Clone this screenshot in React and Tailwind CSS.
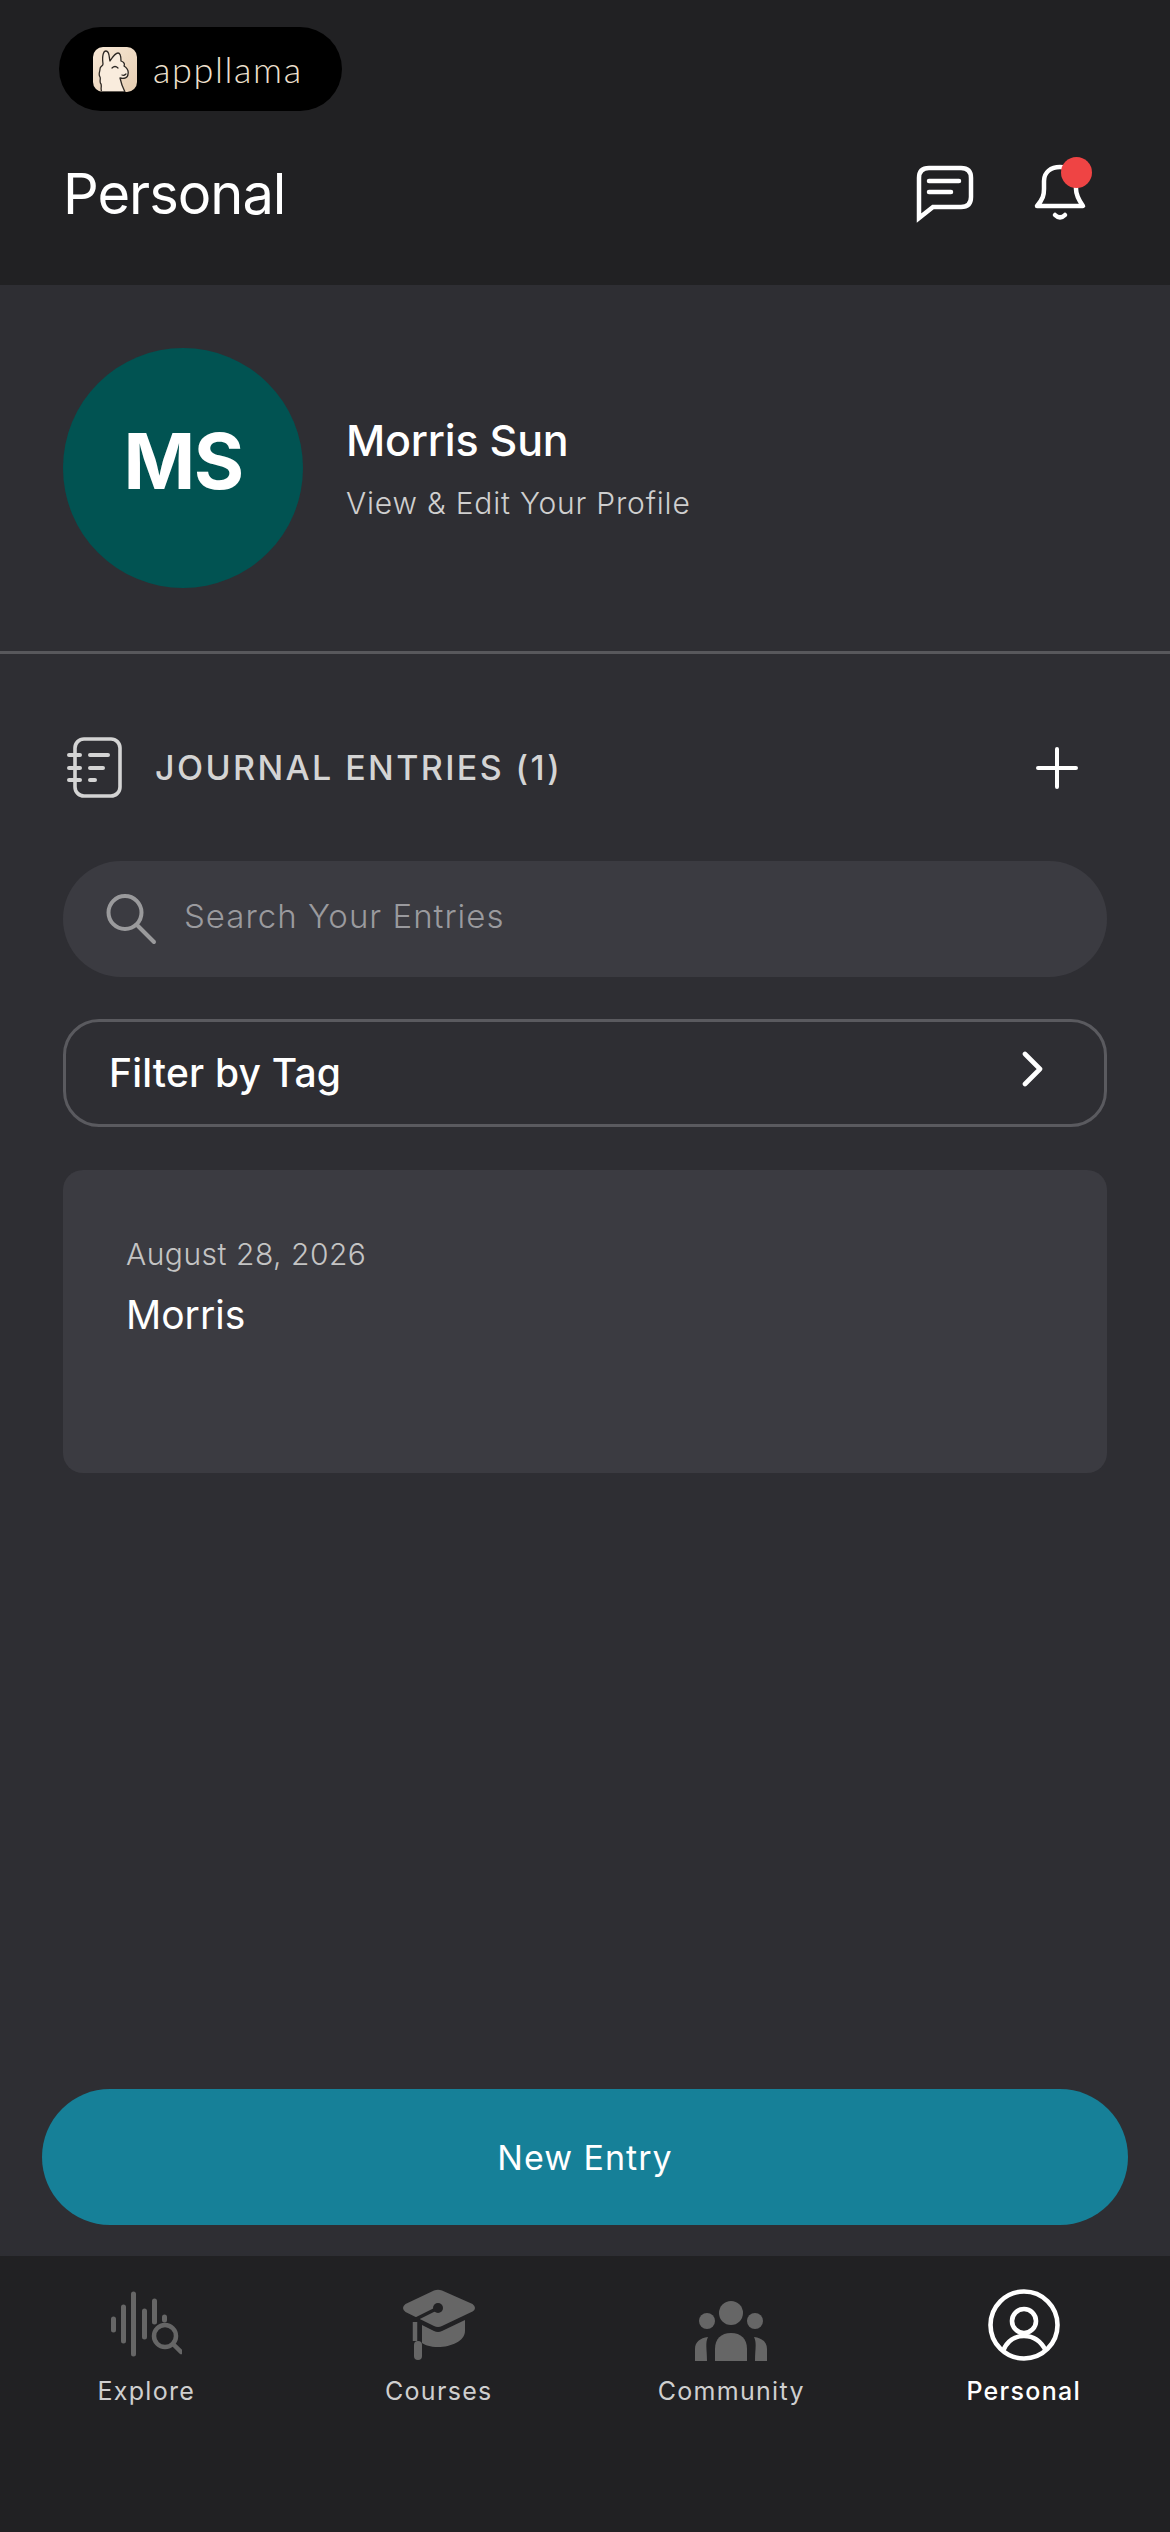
import React from 'react';

function LlamaLogo() {
  return (
    <svg width="44" height="45" viewBox="0 0 44 45" className="rounded-[10px] shrink-0">
      <defs>
        <linearGradient id="tile" x1="0" y1="0" x2="1" y2="1">
          <stop offset="0" stopColor="#f8e8d6" />
          <stop offset="1" stopColor="#e6ceb2" />
        </linearGradient>
      </defs>
      <rect width="44" height="45" fill="url(#tile)" />
      <path
        d="M9 45C7 42 9 40 8 37C6 35 8 32 7 30C5 27 7 25 7 22C7 18 10 20 10 17C9 10 10 4 13 4C17 4 16 12 17 14C19 11 22 6 25 6C27 6 28 10 28 14C31 15 32 17 31 19C34 21 36 23 35 27C35 31 31 32 27 31C28 36 30 41 32 45Z"
        fill="#f9ecdd"
        stroke="#2d2824"
        strokeWidth="1.3"
        strokeLinejoin="round"
      />
      <path d="M19 21Q22 18 25 21M29 28Q31 29 33 27" fill="none" stroke="#2d2824" strokeWidth="1.2" strokeLinecap="round" />
    </svg>
  );
}

function ChatIcon() {
  return (
    <svg width="60" height="60" viewBox="0 0 60 60" fill="none" stroke="white" strokeWidth="4.5" strokeLinecap="round">
      <path d="M4 54V14Q4 4 14 4H46Q56 4 56 14V33Q56 43 46 43H18Z" />
      <path d="M14 17H44M14 28H36" />
    </svg>
  );
}

function BellIcon() {
  return (
    <div className="relative w-[55px] h-[60px]">
      <svg width="55" height="60" viewBox="0 0 55 60" fill="none" stroke="white" strokeWidth="4.5" strokeLinecap="round" strokeLinejoin="round">
        <path d="M4 42C10 35 11 31 11 25V17C11 8 18 3 27 3C36 3 43 8 43 17V25C43 31 45 35 50 42Z" />
        <path d="M22 51Q27 56 32 51" />
      </svg>
      <span className="absolute left-[28px] top-[-7px] w-[31px] h-[31px] rounded-full bg-[#ef4444]" />
    </div>
  );
}

function JournalIcon() {
  return (
    <svg width="58" height="64" viewBox="0 0 58 64" fill="none" stroke="#d4d4d4" strokeWidth="3.6" strokeLinecap="round">
      <rect x="9" y="3" width="45" height="57" rx="9" />
      <path d="M3 19H14M3 32H14M3 44H14" strokeWidth="4" />
      <path d="M24 19H42M24 32H37M24 44H29" strokeWidth="4" />
    </svg>
  );
}

function SearchIcon() {
  return (
    <svg width="52" height="52" viewBox="0 0 52 52" fill="none" stroke="#9a9a9c" strokeWidth="4" strokeLinecap="round">
      <circle cx="20" cy="19.5" r="16.5" />
      <path d="M32 32L49 49" />
    </svg>
  );
}

function ExploreIcon() {
  return (
    <svg width="72" height="72" viewBox="0 0 72 72" fill="none" stroke="#666666" strokeLinecap="round">
      <g strokeWidth="5">
        <path d="M3.5 30V41M13.5 18V52M23.5 5V65M34.5 22V48M44.5 12V33M54.5 28V31" />
      </g>
      <circle cx="55" cy="47" r="11" strokeWidth="4.5" stroke="#666666" fill="#212123" />
      <path d="M63 55L71 63" strokeWidth="4.5" />
    </svg>
  );
}

function CoursesIcon() {
  return (
    <svg width="72" height="72" viewBox="0 0 72 72">
      <path
        d="M31 1.5Q35 0 39 1.5L69.5 15Q72 17 72 19Q72 21 69.5 22.5L39 37Q35 39 31 37L2.5 23Q0 21 0 19Q0 17 2.5 15Z"
        fill="#666666"
      />
      <path d="M35 19L11 31" stroke="#212123" strokeWidth="3.5" />
      <circle cx="35" cy="19" r="5" fill="#212123" />
      <path d="M19 36L31 42Q35 44 39 42L62 31V42C62 52 48 58 35 58C27 58 22 56 19 54Z" fill="#666666" />
      <path d="M12 33V52" stroke="#666666" strokeWidth="4.5" />
      <rect x="11" y="52" width="8" height="19" rx="4" fill="#666666" />
    </svg>
  );
}

function CommunityIcon() {
  return (
    <svg width="72" height="60" viewBox="0 0 72 60" fill="#666666">
      <circle cx="36" cy="12" r="12" />
      <circle cx="12" cy="20" r="8" />
      <circle cx="60" cy="20" r="8" />
      <path d="M20 60V48C20 38 26 32 36 32C46 32 52 38 52 48V60Z" />
      <path d="M0 60V48C0 41 5 37 13 36C10 42 12 48 12 60Z" />
      <path d="M72 60V48C72 41 67 37 59 36C62 42 60 48 60 60Z" />
    </svg>
  );
}

function PersonalIcon() {
  return (
    <svg width="72" height="72" viewBox="0 0 72 72" fill="none" stroke="white" strokeWidth="4.6">
      <circle cx="36" cy="36" r="33.5" />
      <circle cx="36" cy="32" r="12" />
      <path d="M15 62C19 52 27 47 36 47C45 47 53 52 58 62" />
    </svg>
  );
}

function NavItem({ icon, label, active }) {
  return (
    <div className="flex flex-col items-center">
      <div className="h-[72px] flex items-end justify-center">{icon}</div>
      <span className={active
        ? 'mt-[15px] text-[25px] leading-[30px] tracking-[1.3px] font-medium text-white'
        : 'mt-[15px] text-[25px] leading-[30px] tracking-[1.3px] text-[#cfcfcf]'}>
        {label}
      </span>
    </div>
  );
}

export default function App() {
  return (
    <div className="w-[1170px] h-[2532px] flex flex-col bg-[#2e2e33] text-white font-['Inter',sans-serif] overflow-hidden">
      {/* Header */}
      <header className="h-[285px] shrink-0 bg-[#212123] pt-[27px] pl-[59px] pr-[82px]">
        <div className="w-[283px] h-[84px] rounded-full bg-black flex items-center pl-[34px]">
          <LlamaLogo />
          <span className="ml-[16px] text-[36px] leading-none font-light tracking-[1.6px] text-[#efe0cf] font-['Lato',sans-serif]">appllama</span>
        </div>
        <div className="mt-[45px] h-[75px] flex items-center justify-between">
          <h1 className="ml-[4px] text-[56px] leading-none font-normal tracking-[-1px]">Personal</h1>
          <div className="flex items-center gap-[58px]">
            <ChatIcon />
            <BellIcon />
          </div>
        </div>
      </header>

      {/* Profile */}
      <section className="h-[369px] shrink-0 border-b-[3px] border-[#58585c] pt-[63px] pl-[63px] flex items-start">
        <div className="w-[240px] h-[240px] rounded-full bg-[#015352] flex items-center justify-center pb-[12px] text-[77px] font-bold tracking-[-1.5px]">MS</div>
        <div className="ml-[43px] pt-[67px]">
          <div className="text-[43px] leading-[50px] font-medium tracking-[-0.2px]">Morris Sun</div>
          <div className="mt-[20px] text-[30px] leading-[36px] tracking-[0.8px] font-light text-[#cfcfcf]">View &amp; Edit Your Profile</div>
        </div>
      </section>

      {/* Journal */}
      <main className="flex-1 flex flex-col">
        <div className="px-[63px]">
          <div className="mt-[81px] h-[65px] flex items-center pl-[3px]">
            <JournalIcon />
            <span className="ml-[31px] text-[34px] font-medium tracking-[2.4px] text-[#d4d4d4]">JOURNAL ENTRIES (1)</span>
            <svg className="ml-auto mr-[29px]" width="42" height="42" viewBox="0 0 42 42" stroke="white" strokeWidth="4" strokeLinecap="round">
              <path d="M21 2V40M2 21H40" />
            </svg>
          </div>

          <div className="mt-[61px] h-[116px] rounded-full bg-[#3b3b41] flex items-center pl-[42px] gap-[27px]">
            <SearchIcon />
            <span className="text-[33px] text-[#9a9a9e] tracking-[1px] font-light pb-[4px]">Search Your Entries</span>
          </div>

          <div className="mt-[42px] h-[108px] rounded-[36px] border-[3px] border-[#5a5a5f] flex items-center justify-between pl-[43px] pr-[60px]">
            <span className="text-[39px] font-medium tracking-[0.2px]">Filter by Tag</span>
            <svg className="mb-[8px]" width="22" height="36" viewBox="0 0 22 36" fill="none" stroke="white" strokeWidth="4.6" strokeLinecap="round" strokeLinejoin="round">
              <path d="M3 3L18 18L3 33" />
            </svg>
          </div>

          <div className="mt-[43px] h-[303px] rounded-[20px] bg-[#3b3b41] pt-[66px] pl-[63px]">
            <div className="text-[30px] leading-[36px] tracking-[0.5px] font-light text-[#c4c4c4]">August 28, 2026</div>
            <div className="mt-[20px] text-[39px] leading-[46px]">Morris</div>
          </div>
        </div>

        <button className="mt-auto mb-[31px] mx-[42px] h-[136px] rounded-full bg-[#168098] text-[34px] font-normal tracking-[1px]">New Entry</button>
      </main>

      {/* Bottom nav */}
      <nav className="h-[276px] shrink-0 bg-[#212123] pt-[33px] grid grid-cols-4 items-start">
        <NavItem icon={<ExploreIcon />} label="Explore" />
        <NavItem icon={<CoursesIcon />} label="Courses" />
        <NavItem icon={<CommunityIcon />} label="Community" />
        <NavItem icon={<PersonalIcon />} label="Personal" active />
      </nav>
    </div>
  );
}
